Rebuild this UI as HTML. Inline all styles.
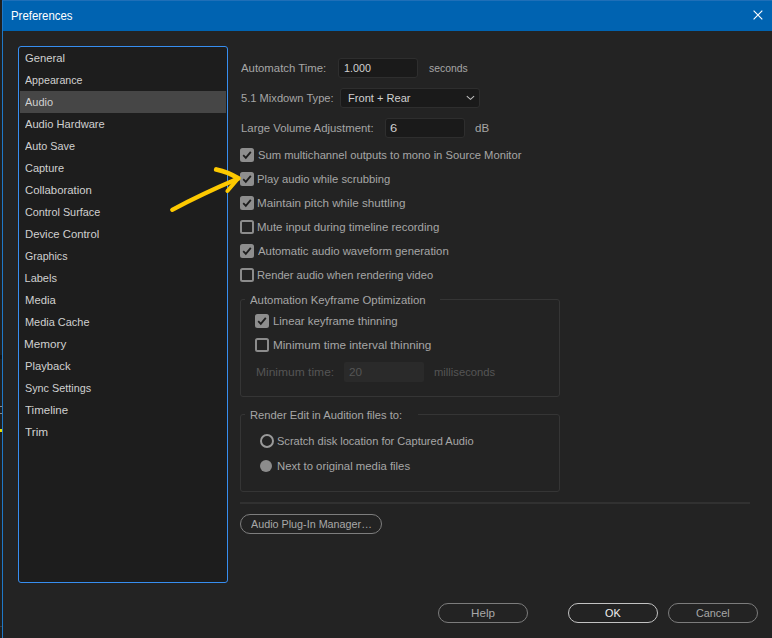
<!DOCTYPE html>
<html><head><meta charset="utf-8"><style>
html,body{margin:0;padding:0;width:772px;height:638px;overflow:hidden;background:#232323;font-family:"Liberation Sans", sans-serif}
div{box-sizing:border-box}
.t{position:absolute;white-space:nowrap;line-height:1;transform-origin:0 0}
#outer{position:absolute;left:0;top:0;width:2px;height:638px;background:#1f1f1f}
#win{position:absolute;left:2px;top:0;width:770px;height:638px;background:#232323;border-left:1px solid #1f78c6}
#title{position:absolute;left:2px;top:0;width:770px;height:31px;background:#0063b1;border-left:1px solid #1f78c6;border-top:1px solid #1f6fb8}
#list{position:absolute;left:18px;top:46px;width:210px;height:537px;background:#1d1d1d;border:1px solid #378ef0;border-radius:3px}
.inp{position:absolute;background:#1a1a1a;border:1px solid #2e2e2e;border-radius:3px}
.cb{position:absolute;width:14px;height:14px;border:2px solid #8c8c8c;border-radius:2.5px}
.cb.on{background:#8e8e8e;border-color:#8e8e8e}
.grp{position:absolute;border:1px solid #353535;border-radius:3px}
.rad{position:absolute;width:14px;height:14px;border:2px solid #9a9a9a;border-radius:50%}
.rad.fill{background:#8c8c8c;border:none;width:12px;height:12px}
.btn{position:absolute;border:1px solid #8a8a8a;border-radius:10px}
</style></head><body>
<div id="outer"></div>
<div id="win"></div>
<div style="position:absolute;left:0;top:406px;width:2px;height:1px;background:#8a8a8a"></div><div style="position:absolute;left:0;top:413px;width:2px;height:1px;background:#8a8a8a"></div><div style="position:absolute;left:0;top:626px;width:2px;height:1px;background:#3c3c3c"></div><div style="position:absolute;left:0;top:355px;width:2px;height:4px;background:#141414"></div><div style="position:absolute;left:0;top:429px;width:2px;height:3px;background:#e8e000"></div>
<div id="title"></div>
<div class="t" style="left:10.99px;top:10px;font-size:12px;color:#ffffff;transform:scaleX(0.9499);">Preferences</div>
<svg style="position:absolute;left:744px;top:4px" width="28" height="24" viewBox="744 4 28 24"><path d="M753.6 10.7 L762.3 19.3 M762.3 10.7 L753.6 19.3" stroke="#fff" stroke-width="1.15"/></svg>
<div id="list"></div>
<div style="position:absolute;left:20px;top:91px;width:206px;height:22px;background:#464646"></div>
<div class="t" style="left:24.89px;top:53px;font-size:11px;color:#d0d0d0;transform:scaleX(1.0191);">General</div>
<div class="t" style="left:25.28px;top:75px;font-size:11px;color:#d0d0d0;transform:scaleX(0.9702);">Appearance</div>
<div class="t" style="left:25.28px;top:97px;font-size:11px;color:#d0d0d0;transform:scaleX(0.9964);">Audio</div>
<div class="t" style="left:25.27px;top:119px;font-size:11px;color:#d0d0d0;transform:scaleX(1.0109);">Audio Hardware</div>
<div class="t" style="left:25.28px;top:141px;font-size:11px;color:#d0d0d0;transform:scaleX(0.9855);">Auto Save</div>
<div class="t" style="left:24.90px;top:163px;font-size:11px;color:#d0d0d0;transform:scaleX(0.9967);">Capture</div>
<div class="t" style="left:24.88px;top:185px;font-size:11px;color:#d0d0d0;transform:scaleX(1.0310);">Collaboration</div>
<div class="t" style="left:24.91px;top:207px;font-size:11px;color:#d0d0d0;transform:scaleX(0.9841);">Control Surface</div>
<div class="t" style="left:24.50px;top:229px;font-size:11px;color:#d0d0d0;transform:scaleX(1.0284);">Device Control</div>
<div class="t" style="left:24.92px;top:251px;font-size:11px;color:#d0d0d0;transform:scaleX(0.9646);">Graphics</div>
<div class="t" style="left:24.52px;top:273px;font-size:11px;color:#d0d0d0;">Labels</div>
<div class="t" style="left:24.50px;top:295px;font-size:11px;color:#d0d0d0;transform:scaleX(1.0266);">Media</div>
<div class="t" style="left:24.53px;top:317px;font-size:11px;color:#d0d0d0;transform:scaleX(0.9953);">Media Cache</div>
<div class="t" style="left:24.47px;top:339px;font-size:11px;color:#d0d0d0;transform:scaleX(1.0632);">Memory</div>
<div class="t" style="left:24.51px;top:361px;font-size:11px;color:#d0d0d0;transform:scaleX(1.0194);">Playback</div>
<div class="t" style="left:24.91px;top:383px;font-size:11px;color:#d0d0d0;transform:scaleX(0.9823);">Sync Settings</div>
<div class="t" style="left:25.14px;top:405px;font-size:11px;color:#d0d0d0;transform:scaleX(1.0477);">Timeline</div>
<div class="t" style="left:25.13px;top:427px;font-size:11px;color:#d0d0d0;transform:scaleX(1.0715);">Trim</div>
<div class="t" style="left:240.87px;top:63px;font-size:11px;color:#a6a6a6;transform:scaleX(1.0323);">Automatch Time:</div>
<div class="inp" style="left:338px;top:58px;width:80px;height:20px"></div>
<div class="t" style="left:343.55px;top:63px;font-size:11px;color:#d0d0d0;transform:scaleX(0.9752);">1.000</div>
<div class="t" style="left:428.65px;top:63px;font-size:11px;color:#a6a6a6;transform:scaleX(0.9441);">seconds</div>
<div class="t" style="left:241.09px;top:93px;font-size:11px;color:#a6a6a6;transform:scaleX(1.0122);">5.1 Mixdown Type:</div>
<div class="inp" style="left:340px;top:88px;width:140px;height:20px"></div>
<div class="t" style="left:347.62px;top:93px;font-size:11px;color:#d0d0d0;transform:scaleX(1.0082);">Front + Rear</div>
<svg style="position:absolute;left:460px;top:86px" width="24" height="24" viewBox="0 0 24 24"><path d="M6.8 10.2 L10.5 13.3 L14.1 10.2" stroke="#c0c0c0" stroke-width="1.1" fill="none"/></svg>
<div class="t" style="left:240.50px;top:123px;font-size:11px;color:#a6a6a6;transform:scaleX(1.0324);">Large Volume Adjustment:</div>
<div class="inp" style="left:385px;top:118px;width:80px;height:20px"></div>
<div class="t" style="left:390.41px;top:123px;font-size:11px;color:#d0d0d0;transform:scaleX(1.1707);">6</div>
<div class="t" style="left:475.47px;top:123px;font-size:11px;color:#a6a6a6;transform:scaleX(1.0505);">dB</div>
<div class="cb on" style="left:240px;top:148px"></div>
<svg style="position:absolute;left:240px;top:148px" width="14" height="14" viewBox="0 0 14 14"><path d="M3.2 7.2 L5.8 9.8 L10.8 3.8" stroke="#1e1e1e" stroke-width="1.8" fill="none"/></svg>
<div class="t" style="left:257.69px;top:150px;font-size:11px;color:#a6a6a6;transform:scaleX(1.0186);">Sum multichannel outputs to mono in Source Monitor</div>
<div class="cb on" style="left:240px;top:172px"></div>
<svg style="position:absolute;left:240px;top:172px" width="14" height="14" viewBox="0 0 14 14"><path d="M3.2 7.2 L5.8 9.8 L10.8 3.8" stroke="#1e1e1e" stroke-width="1.8" fill="none"/></svg>
<div class="t" style="left:257.30px;top:174px;font-size:11px;color:#a6a6a6;transform:scaleX(1.0231);">Play audio while scrubbing</div>
<div class="cb on" style="left:240px;top:196px"></div>
<svg style="position:absolute;left:240px;top:196px" width="14" height="14" viewBox="0 0 14 14"><path d="M3.2 7.2 L5.8 9.8 L10.8 3.8" stroke="#1e1e1e" stroke-width="1.8" fill="none"/></svg>
<div class="t" style="left:257.27px;top:198px;font-size:11px;color:#a6a6a6;transform:scaleX(1.0602);">Maintain pitch while shuttling</div>
<div class="cb" style="left:240px;top:220px"></div>
<div class="t" style="left:257.29px;top:222px;font-size:11px;color:#a6a6a6;transform:scaleX(1.0424);">Mute input during timeline recording</div>
<div class="cb on" style="left:240px;top:244px"></div>
<svg style="position:absolute;left:240px;top:244px" width="14" height="14" viewBox="0 0 14 14"><path d="M3.2 7.2 L5.8 9.8 L10.8 3.8" stroke="#1e1e1e" stroke-width="1.8" fill="none"/></svg>
<div class="t" style="left:258.07px;top:246px;font-size:11px;color:#a6a6a6;transform:scaleX(1.0329);">Automatic audio waveform generation</div>
<div class="cb" style="left:240px;top:268px"></div>
<div class="t" style="left:257.32px;top:270px;font-size:11px;color:#a6a6a6;transform:scaleX(1.0106);">Render audio when rendering video</div>
<div class="grp" style="left:240px;top:299px;width:320px;height:98px"></div>
<div style="position:absolute;left:245px;top:296px;height:6px;width:195px;background:#232323"></div>
<div class="t" style="left:250.37px;top:295px;font-size:11px;color:#a6a6a6;transform:scaleX(1.0336);">Automation Keyframe Optimization</div>
<div class="cb on" style="left:255px;top:314px"></div>
<svg style="position:absolute;left:255px;top:314px" width="14" height="14" viewBox="0 0 14 14"><path d="M3.2 7.2 L5.8 9.8 L10.8 3.8" stroke="#1e1e1e" stroke-width="1.8" fill="none"/></svg>
<div class="t" style="left:272.89px;top:316px;font-size:11px;color:#a6a6a6;transform:scaleX(1.0347);">Linear keyframe thinning</div>
<div class="cb" style="left:255px;top:338px"></div>
<div class="t" style="left:272.87px;top:340px;font-size:11px;color:#a6a6a6;transform:scaleX(1.0660);">Minimum time interval thinning</div>
<div class="t" style="left:255.54px;top:367px;font-size:11px;color:#555555;transform:scaleX(1.0930);">Minimum time:</div>
<div style="position:absolute;left:344px;top:362px;width:80px;height:20px;background:#2a2a2a;border-radius:2px"></div>
<div class="t" style="left:349.17px;top:367px;font-size:11px;color:#555555;transform:scaleX(1.0667);">20</div>
<div class="t" style="left:434.44px;top:367px;font-size:11px;color:#555555;transform:scaleX(1.0196);">milliseconds</div>
<div class="grp" style="left:240px;top:414px;width:320px;height:78px"></div>
<div style="position:absolute;left:245px;top:411px;height:6px;width:173px;background:#232323"></div>
<div class="t" style="left:249.91px;top:410px;font-size:11px;color:#a6a6a6;transform:scaleX(1.0157);">Render Edit in Audition files to:</div>
<div class="rad" style="left:260px;top:434px"></div>
<div class="t" style="left:277.10px;top:436px;font-size:11px;color:#a6a6a6;transform:scaleX(1.0045);">Scratch disk location for Captured Audio</div>
<div class="rad fill" style="left:260.2px;top:459.6px"></div>
<div class="t" style="left:276.70px;top:461px;font-size:11px;color:#a6a6a6;transform:scaleX(1.0317);">Next to original media files</div>
<div style="position:absolute;left:240px;top:502px;width:510px;height:2px;background:#313131"></div>
<div class="btn" style="left:240px;top:514px;width:142px;height:20px;border-color:#7e7e7e"></div>
<div class="t" style="left:250.88px;top:519px;font-size:11px;color:#a8a8a8;transform:scaleX(0.9789);">Audio Plug-In Manager…</div>
<div class="btn" style="left:438px;top:603px;width:90px;height:20px;border-color:#7c7c7c"></div>
<div class="t" style="left:470.67px;top:608px;font-size:11px;color:#a8a8a8;transform:scaleX(1.0588);">Help</div>
<div class="btn" style="left:568px;top:603px;width:90px;height:20px;border-color:#c2c2c2"></div>
<div class="t" style="left:604.51px;top:608px;font-size:11px;color:#f0f0f0;transform:scaleX(0.9836);">OK</div>
<div class="btn" style="left:668px;top:603px;width:90px;height:20px;border-color:#7c7c7c"></div>
<div class="t" style="left:696.01px;top:608px;font-size:11px;color:#a8a8a8;transform:scaleX(0.9848);">Cancel</div>
<svg style="position:absolute;left:0;top:0" width="772" height="638" viewBox="0 0 772 638"><g stroke="#fdc900" stroke-linecap="round" stroke-linejoin="round" fill="none"><path stroke-width="4.2" d="M172.2 209.8 Q202 194 236.5 179.3"/><path stroke-width="4.8" d="M216.3 169.5 Q228 172 238.3 178.3"/><path stroke-width="4" d="M238.3 178.3 L227.4 191"/></g></svg>
</body></html>
